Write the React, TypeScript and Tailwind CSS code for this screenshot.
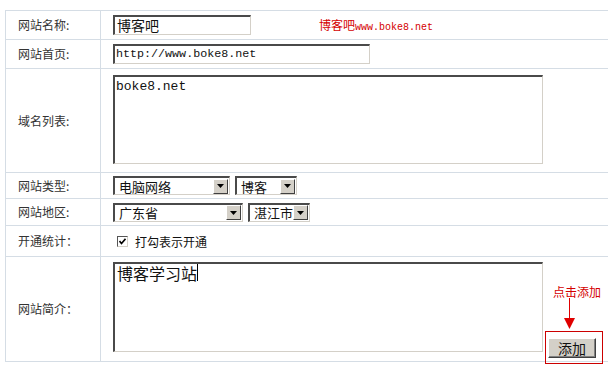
import React from 'react';

const cjk = "font-['Noto_Sans_CJK_SC',sans-serif]";
const mono = "font-['Liberation_Mono','Noto_Sans_CJK_SC',monospace]";

const Label = ({ text }: { text: string }) => (
  <div className="w-[95px] shrink-0 border-r border-[#d5dde5] flex items-center pl-[12px] text-[12px] text-[#333]">
    {text}
  </div>
);

const Select = ({ width, text }: { width: string; text: string }) => (
  <div
    className={`${width} h-[19px] flex items-center bg-white border-t-2 border-l-2 border-t-[#4a4a4a] border-l-[#4a4a4a] border-b border-r border-b-[#d4d0c8] border-r-[#d4d0c8]`}
  >
    <span className="flex-1 pl-[4px] text-[13px] leading-none text-[#111]">{text}</span>
    <span className="w-[15px] h-[15px] mr-[1px] bg-[#d4d0c8] flex items-center justify-center border-t border-l border-t-white border-l-white border-b border-r border-b-[#404040] border-r-[#404040]">
      <svg width="7" height="4" viewBox="0 0 7 4">
        <polygon points="0,0 7,0 3.5,4" fill="#000" />
      </svg>
    </span>
  </div>
);

const App = () => {
  return (
    <div className={`relative w-[608px] h-[372px] bg-white overflow-hidden ${cjk}`}>
      {/* Form table */}
      <div className="ml-[5px] mt-[10px] w-[603px] border-l border-t border-[#d5dde5]">
        {/* 网站名称 */}
        <div className="flex h-[29px] border-b border-[#d5dde5]">
          <Label text="网站名称:" />
          <div className="flex-1 flex items-center pl-[12px]">
            <div className="w-[138px] h-[20px] flex items-center pl-[2px] text-[14px] text-[#111] border-t-2 border-l-2 border-t-[#4a4a4a] border-l-[#4a4a4a] border-b border-r border-b-[#d4d0c8] border-r-[#d4d0c8]">
              博客吧
            </div>
            <span className="ml-[68px] text-[12px] text-[#d40000]">
              博客吧<span className={`${mono} text-[10px]`}>www.boke8.net</span>
            </span>
          </div>
        </div>

        {/* 网站首页 */}
        <div className="flex h-[29px] border-b border-[#d5dde5]">
          <Label text="网站首页:" />
          <div className="flex-1 flex items-center pl-[12px]">
            <div className={`w-[257px] h-[20px] flex items-center pl-[1px] ${mono} text-[11.7px] text-[#111] border-t-2 border-l-2 border-t-[#4a4a4a] border-l-[#4a4a4a] border-b border-r border-b-[#d4d0c8] border-r-[#d4d0c8]`}>
              http://www.boke8.net
            </div>
          </div>
        </div>

        {/* 域名列表 */}
        <div className="flex h-[104px] border-b border-[#d5dde5]">
          <Label text="域名列表:" />
          <div className="flex-1 flex items-start pl-[12px]">
            <div className={`mt-[6px] w-[430px] h-[89px] pl-[1px] pt-[2px] ${mono} text-[13px] leading-[15px] text-[#111] border-t-2 border-l-2 border-t-[#4a4a4a] border-l-[#4a4a4a] border-b border-r border-b-[#d4d0c8] border-r-[#d4d0c8]`}>
              boke8.net
            </div>
          </div>
        </div>

        {/* 网站类型 */}
        <div className="flex h-[26px] border-b border-[#d5dde5]">
          <Label text="网站类型:" />
          <div className="flex-1 flex items-center gap-[5px] pl-[12px]">
            <Select width="w-[117px]" text="电脑网络" />
            <Select width="w-[62px]" text="博客" />
          </div>
        </div>

        {/* 网站地区 */}
        <div className="flex h-[27px] border-b border-[#d5dde5]">
          <Label text="网站地区:" />
          <div className="flex-1 flex items-center gap-[5px] pl-[12px]">
            <Select width="w-[130px]" text="广东省" />
            <Select width="w-[62px]" text="湛江市" />
          </div>
        </div>

        {/* 开通统计 */}
        <div className="flex h-[31px] border-b border-[#d5dde5]">
          <Label text="开通统计：" />
          <div className="flex-1 flex items-center pl-[12px]">
            <span className="ml-[4px] mt-[1px] w-[11px] h-[11px] bg-white flex items-center justify-center border-t border-l border-t-[#555] border-l-[#555] border-b border-r border-b-[#d4d0c8] border-r-[#d4d0c8]">
              <svg width="7" height="7" viewBox="0 0 7 7">
                <polyline points="0.5,3 2.5,5.5 6.5,0.8" fill="none" stroke="#000" strokeWidth="1.6" />
              </svg>
            </span>
            <span className="ml-[7px] mt-[2px] text-[12px] text-[#111]">打勾表示开通</span>
          </div>
        </div>

        {/* 网站简介 */}
        <div className="flex h-[105px] border-b border-[#d5dde5]">
          <Label text="网站简介：" />
          <div className="flex-1 flex items-start pl-[12px]">
            <div className="mt-[5px] w-[430px] h-[90px] pl-[2px] text-[16px] leading-[18px] text-[#111] border-t-2 border-l-2 border-t-[#4a4a4a] border-l-[#4a4a4a] border-b border-r border-b-[#d4d0c8] border-r-[#d4d0c8]">
              博客学习站<span className="inline-block w-[1px] h-[17px] bg-black align-top"></span>
            </div>
            <button className="self-end mb-[3px] ml-[5px] w-[48px] h-[20px] bg-[#d4d0c8] text-[14px] leading-none text-[#111] border-t border-l border-t-white border-l-white border-b border-r border-b-[#404040] border-r-[#404040] shadow-[inset_-1px_-1px_0_#808080]">
              添加
            </button>
          </div>
        </div>
      </div>

      {/* Annotation over the button */}
      <span className="absolute left-[553px] top-[285px] text-[12px] leading-[14px] text-[#d40000]">点击添加</span>
      <span className="absolute left-[569px] top-[298px] w-[1px] h-[21px] bg-[#e00000]"></span>
      <svg className="absolute left-[564px] top-[318px]" width="11" height="11" viewBox="0 0 11 11">
        <polygon points="0,0 11,0 5.5,11" fill="#e00000" />
      </svg>
      <span className="absolute left-[545px] top-[331px] w-[58px] h-[33px] border border-[#cc0000]"></span>
    </div>
  );
};

export default App;
